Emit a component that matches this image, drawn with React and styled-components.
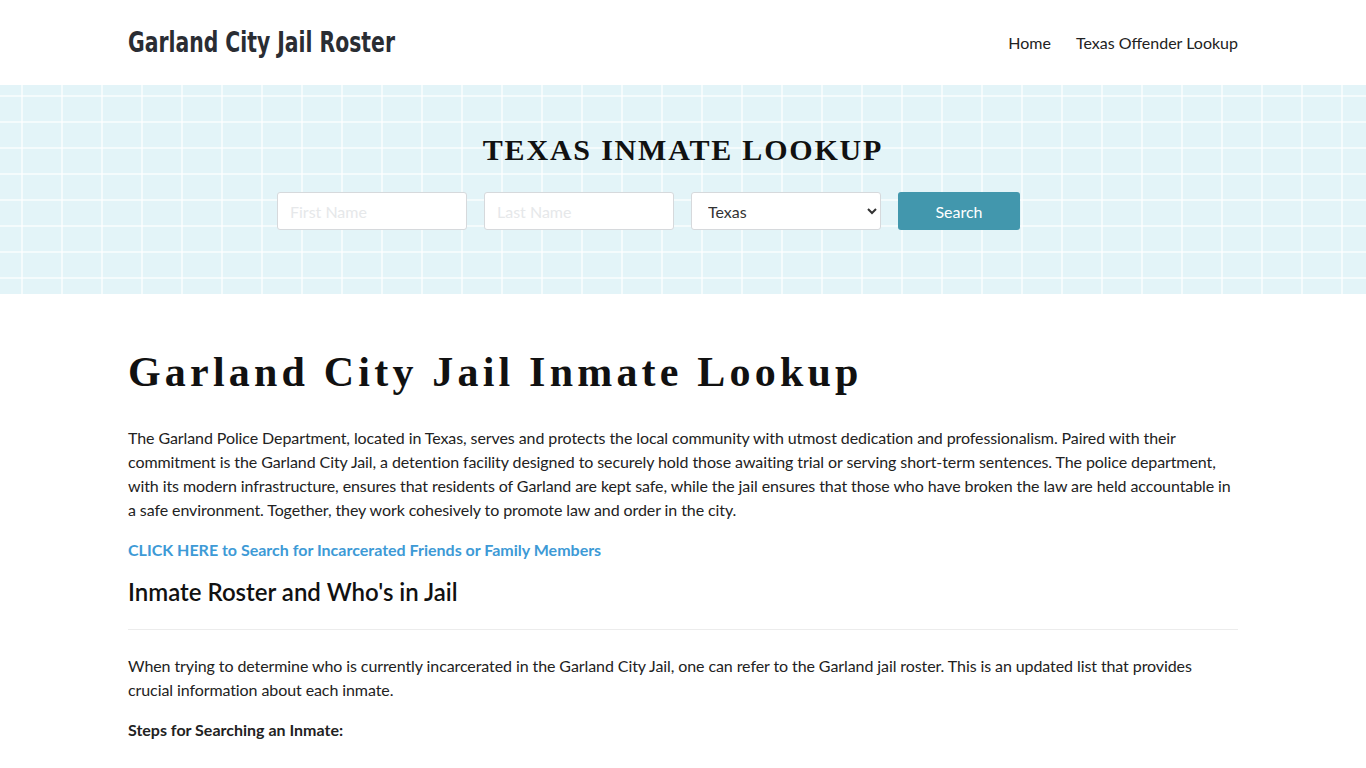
import React from "react";
import styled, { createGlobalStyle } from "styled-components";

const GlobalStyle = createGlobalStyle`
  * { box-sizing: border-box; }
  body {
    margin: 0;
    background: #fff;
    font-family: Lato, "Open Sans", sans-serif;
    color: #222;
  }
`;

const Container = styled.div`
  width: 1110px;
  margin: 0 auto;
`;

const Header = styled.header`
  height: 85px;
  background: #fff;
  ${Container} {
    height: 100%;
    display: flex;
    align-items: center;
    justify-content: space-between;
  }
`;

const Logo = styled.a`
  display: inline-block;
  font-family: "DejaVu Sans", sans-serif;
  font-stretch: condensed;
  font-weight: 700;
  font-size: 29px;
  color: #2a2d33;
  text-decoration: none;
  margin-top: -2px;
  transform: scaleX(0.78);
  transform-origin: left center;
  white-space: nowrap;
`;

const Nav = styled.nav`
  display: flex;
  gap: 25px;
  a {
    font-size: 16px;
    color: #222;
    text-decoration: none;
  }
`;

const Hero = styled.section`
  height: 209px;
  background-color: #e3f4f8;
  background-image:
    linear-gradient(90deg, rgba(255, 255, 255, 0.6) 2px, transparent 2px),
    linear-gradient(0deg, rgba(255, 255, 255, 0.6) 2px, transparent 2px);
  background-size: 40px 26px;
  background-position: 21px 12px;
  display: flex;
  flex-direction: column;
  align-items: center;
  padding-top: 48px;
`;

const HeroTitle = styled.h2`
  margin: 0;
  font-family: "Liberation Serif", "DejaVu Serif", serif;
  font-weight: 700;
  font-size: 30px;
  letter-spacing: 1.8px;
  color: #111;
  line-height: 34px;
`;

const SearchForm = styled.form`
  display: flex;
  gap: 17px;
  margin-top: 25px;
  margin-right: 69px;
`;

const Field = styled.input`
  width: 190px;
  height: 38px;
  border: 1px solid #d6d9dc;
  border-radius: 3px;
  background: #fff;
  padding: 0 12px;
  font-family: Lato, sans-serif;
  font-size: 16px;
  line-height: 36px;
  &::placeholder { color: #e6e8ea; }
`;

const Select = styled.select`
  width: 190px;
  height: 38px;
  border: 1px solid #d6d9dc;
  border-radius: 3px;
  background: #fff;
  padding: 0 12px;
  font-family: Lato, sans-serif;
  font-size: 16px;
  color: #333;
`;

const Button = styled.button`
  width: 122px;
  height: 38px;
  border: none;
  border-radius: 3px;
  background: #4297ad;
  color: #fff;
  font-family: Lato, sans-serif;
  font-size: 16px;
`;

const Main = styled.main`
  padding-top: 52px;
`;

const Title = styled.h1`
  margin: 0 0 28px;
  font-family: "Liberation Serif", "DejaVu Serif", serif;
  font-weight: 700;
  font-size: 42px;
  letter-spacing: 4.2px;
  line-height: 52px;
  color: #111;
`;

const Para = styled.p`
  margin: 0 0 16px;
  font-size: 16px;
  line-height: 24px;
  letter-spacing: -0.09px;
  color: #222;
`;

const Link = styled.a`
  display: block;
  font-size: 16px;
  font-weight: 700;
  line-height: 24px;
  color: #3d9ad6;
  text-decoration: none;
  margin-bottom: 14px;
`;

const SubTitle = styled.h2`
  margin: 0;
  font-size: 24px;
  font-weight: 600;
  line-height: 32px;
  color: #111;
`;

const Rule = styled.hr`
  border: none;
  border-top: 1px solid #ececec;
  margin: 21px 0 24px;
`;

const Strong = styled.p`
  margin: 0;
  font-size: 16px;
  font-weight: 700;
  line-height: 24px;
  color: #222;
`;

export default function App() {
  return (
    <>
      <GlobalStyle />
      <Header>
        <Container>
          <Logo href="#">Garland City Jail Roster</Logo>
          <Nav>
            <a href="#">Home</a>
            <a href="#">Texas Offender Lookup</a>
          </Nav>
        </Container>
      </Header>
      <Hero>
        <HeroTitle>TEXAS INMATE LOOKUP</HeroTitle>
        <SearchForm onSubmit={(e) => e.preventDefault()}>
          <Field placeholder="First Name" />
          <Field placeholder="Last Name" />
          <Select defaultValue="Texas">
            <option>Texas</option>
          </Select>
          <Button type="submit">Search</Button>
        </SearchForm>
      </Hero>
      <Main>
        <Container>
          <Title>Garland City Jail Inmate Lookup</Title>
          <Para>
            The Garland Police Department, located in Texas, serves and protects the local community with utmost dedication and professionalism. Paired with their commitment is the Garland City Jail, a detention facility designed to securely hold those awaiting trial or serving short-term sentences. The police department, with its modern infrastructure, ensures that residents of Garland are kept safe, while the jail ensures that those who have broken the law are held accountable in a safe environment. Together, they work cohesively to promote law and order in the city.
          </Para>
          <Link href="#">CLICK HERE to Search for Incarcerated Friends or Family Members</Link>
          <SubTitle>Inmate Roster and Who's in Jail</SubTitle>
          <Rule />
          <Para>
            When trying to determine who is currently incarcerated in the Garland City Jail, one can refer to the Garland jail roster. This is an updated list that provides crucial information about each inmate.
          </Para>
          <Strong>Steps for Searching an Inmate:</Strong>
        </Container>
      </Main>
    </>
  );
}
